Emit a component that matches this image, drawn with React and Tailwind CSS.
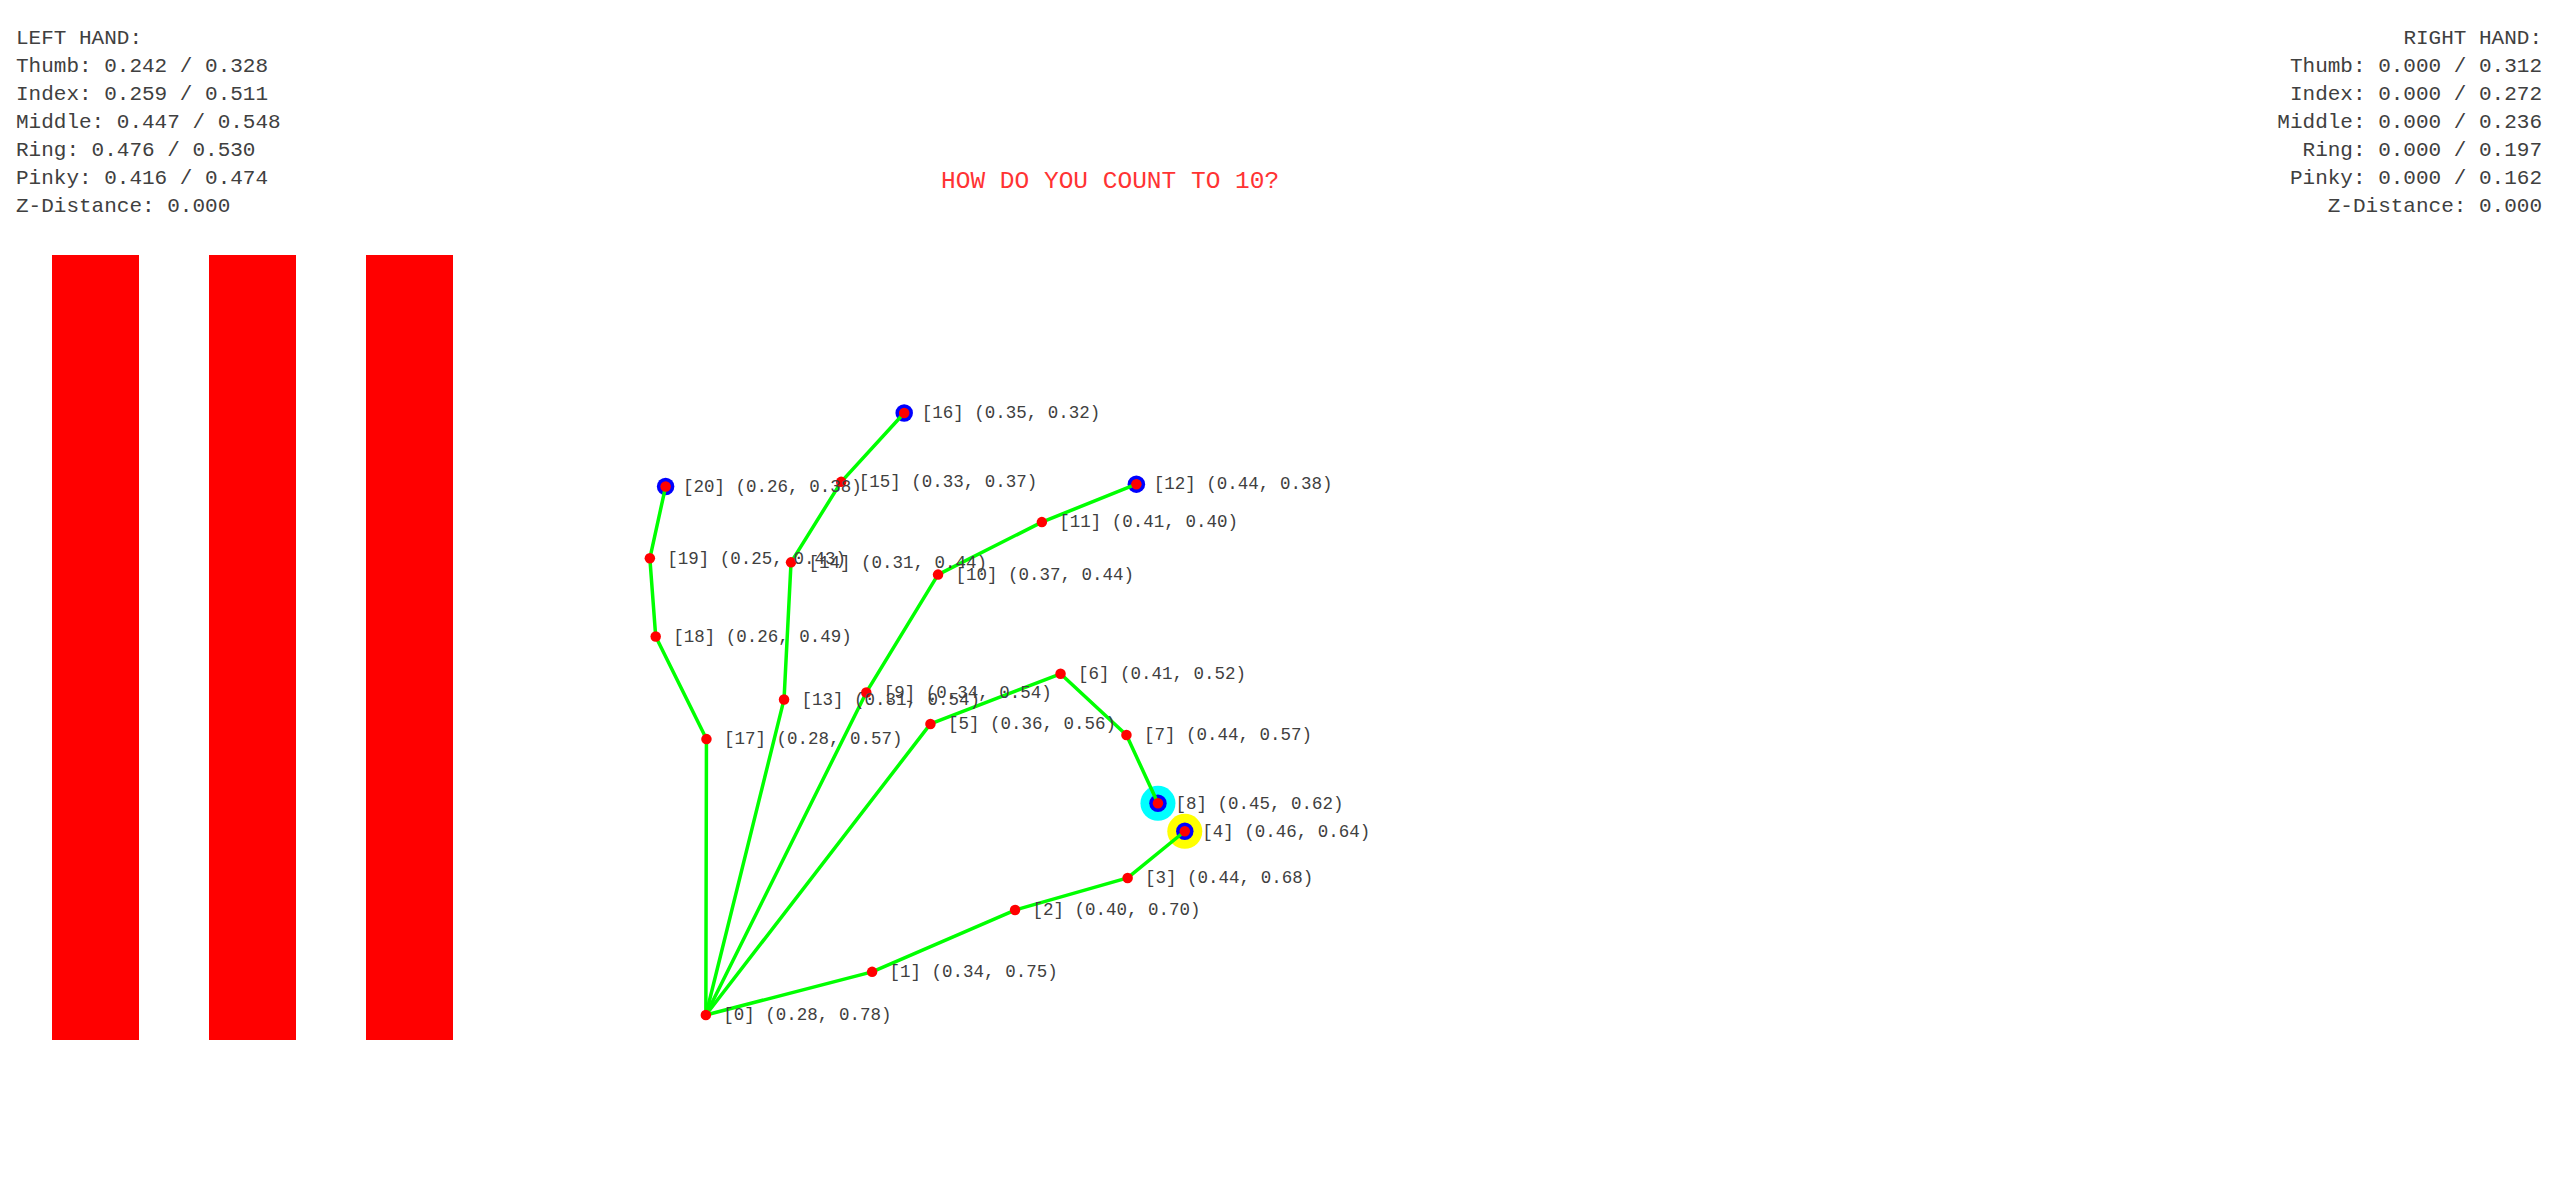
const MONO = "font-['Courier_New','Liberation_Mono',monospace]";

const leftHand = [
  "LEFT HAND:",
  "Thumb: 0.242 / 0.328",
  "Index: 0.259 / 0.511",
  "Middle: 0.447 / 0.548",
  "Ring: 0.476 / 0.530",
  "Pinky: 0.416 / 0.474",
  "Z-Distance: 0.000",
];

const rightHand = [
  "RIGHT HAND:",
  "Thumb: 0.000 / 0.312",
  "Index: 0.000 / 0.272",
  "Middle: 0.000 / 0.236",
  "Ring: 0.000 / 0.197",
  "Pinky: 0.000 / 0.162",
  "Z-Distance: 0.000",
];

// Landmarks of the tracked hand, in the units of the drawing's viewBox.
const landmarks = [
  { x: 1210, y: 1740, label: "(0.28, 0.78)" },
  { x: 1495, y: 1666, label: "(0.34, 0.75)" },
  { x: 1740, y: 1560, label: "(0.40, 0.70)" },
  { x: 1933, y: 1505, label: "(0.44, 0.68)" },
  { x: 2031, y: 1425, label: "(0.46, 0.64)" },
  { x: 1595, y: 1241, label: "(0.36, 0.56)" },
  { x: 1818, y: 1155, label: "(0.41, 0.52)" },
  { x: 1931, y: 1260, label: "(0.44, 0.57)" },
  { x: 1985, y: 1377, label: "(0.45, 0.62)" },
  { x: 1485, y: 1187, label: "(0.34, 0.54)" },
  { x: 1608, y: 985, label: "(0.37, 0.44)" },
  { x: 1786, y: 895, label: "(0.41, 0.40)" },
  { x: 1948, y: 830, label: "(0.44, 0.38)" },
  { x: 1344, y: 1199, label: "(0.31, 0.54)" },
  { x: 1356, y: 964, label: "(0.31, 0.44)" },
  { x: 1442, y: 826, label: "(0.33, 0.37)" },
  { x: 1550, y: 708, label: "(0.35, 0.32)" },
  { x: 1211, y: 1267, label: "(0.28, 0.57)" },
  { x: 1124, y: 1091, label: "(0.26, 0.49)" },
  { x: 1114, y: 957, label: "(0.25, 0.43)" },
  { x: 1141, y: 834, label: "(0.26, 0.38)" },
];

const fingers = [
  [0, 1, 2, 3, 4],
  [0, 5, 6, 7, 8],
  [0, 9, 10, 11, 12],
  [0, 13, 14, 15, 16],
  [0, 17, 18, 19, 20],
];

const tips = [4, 8, 12, 16, 20];

function Readout({ lines, alignment }) {
  return (
    <section className={alignment}>
      {lines.map((line) => (
        <p key={line}>{line}</p>
      ))}
    </section>
  );
}

function HandDrawing() {
  return (
    <svg
      viewBox="0 0 4385 2041"
      className={`pointer-events-none absolute top-0 left-0 w-full ${MONO}`}
      role="img"
      aria-label="Tracked hand landmarks"
    >
      <text x="1903" y="322" textAnchor="middle" fontSize="42" fill="#ff3333">
        HOW DO YOU COUNT TO 10?
      </text>
      <circle cx={landmarks[4].x} cy={landmarks[4].y} r="30" fill="#ffff00" />
      <circle cx={landmarks[8].x} cy={landmarks[8].y} r="30" fill="#00ffff" />
      {tips.map((i) => (
        <circle key={i} cx={landmarks[i].x} cy={landmarks[i].y} r="15" fill="#0000ff" />
      ))}
      {fingers.map((chain) => (
        <polyline
          key={chain[1]}
          points={chain.map((i) => `${landmarks[i].x},${landmarks[i].y}`).join(" ")}
          fill="none"
          stroke="#00ff00"
          strokeWidth="6"
          strokeLinejoin="round"
        />
      ))}
      {landmarks.map((p, i) => (
        <circle key={i} cx={p.x} cy={p.y} r="9" fill="#ff0000" />
      ))}
      {landmarks.map((p, i) => (
        <text key={i} x={p.x + 30} y={p.y + 9} fontSize="30" fill="#404040">
          {`[${i}] ${p.label}`}
        </text>
      ))}
    </svg>
  );
}

export default function App() {
  return (
    <main className={`relative min-h-screen overflow-hidden bg-white text-[#404040] ${MONO}`}>
      <div className="flex justify-between px-4 pt-[25px] text-[21px] leading-7">
        <Readout lines={leftHand} alignment="text-left" />
        <Readout lines={rightHand} alignment="text-right" />
      </div>
      <div className="mt-[34px] ml-[52px] flex gap-[70px]">
        <div className="h-[785px] w-[87px] bg-[#ff0000]" />
        <div className="h-[785px] w-[87px] bg-[#ff0000]" />
        <div className="h-[785px] w-[87px] bg-[#ff0000]" />
      </div>
      <HandDrawing />
    </main>
  );
}
